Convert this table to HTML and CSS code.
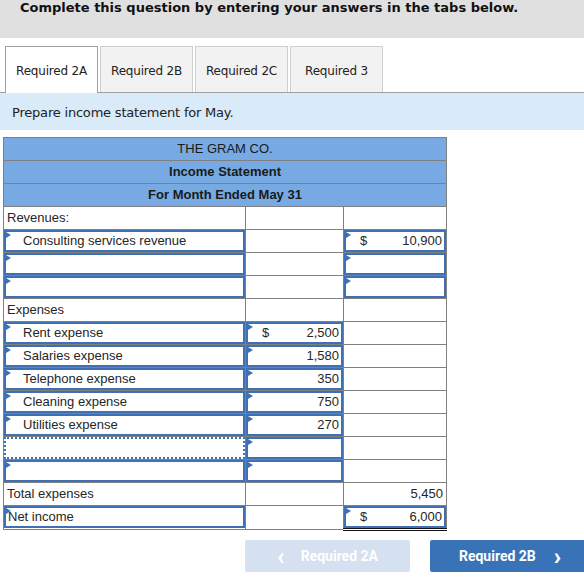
FILE: index.html
```html
<!DOCTYPE html>
<html>
<head>
<meta charset="utf-8">
<link rel="stylesheet" href="styles.css">
</head>
<body>
<div class="top">Complete this question by entering your answers in the tabs below.</div>
<div class="tabs">
  <div class="tab active">Required 2A</div>
  <div class="tab">Required 2B</div>
  <div class="tab">Required 2C</div>
  <div class="tab">Required 3</div>
</div>
<div class="band">Prepare income statement for May.</div>
<table class="stmt">
  <colgroup><col class="c1"><col class="c2"><col class="c3"></colgroup>
  <tr class="hd"><td colspan="3">THE GRAM CO.</td></tr>
  <tr class="hd b"><td colspan="3">Income Statement</td></tr>
  <tr class="hd b"><td colspan="3">For Month Ended May 31</td></tr>
  <tr><td><div class="txt">Revenues:</div></td><td></td><td></td></tr>
  <tr><td><div class="inp ind"><span class="flag"></span>Consulting services revenue</div></td><td></td><td><div class="inp num"><span class="flag"></span><span class="dol">$</span><span>10,900</span></div></td></tr>
  <tr><td><div class="inp"><span class="flag"></span></div></td><td></td><td><div class="inp"><span class="flag"></span></div></td></tr>
  <tr><td><div class="inp"><span class="flag"></span></div></td><td></td><td><div class="inp"><span class="flag"></span></div></td></tr>
  <tr><td><div class="txt">Expenses</div></td><td></td><td></td></tr>
  <tr><td><div class="inp ind"><span class="flag"></span>Rent expense</div></td><td><div class="inp num"><span class="flag"></span><span class="dol">$</span><span>2,500</span></div></td><td></td></tr>
  <tr><td><div class="inp ind"><span class="flag"></span>Salaries expense</div></td><td><div class="inp num"><span class="flag"></span><span></span><span>1,580</span></div></td><td></td></tr>
  <tr><td><div class="inp ind"><span class="flag"></span>Telephone expense</div></td><td><div class="inp num"><span class="flag"></span><span></span><span>350</span></div></td><td></td></tr>
  <tr><td><div class="inp ind"><span class="flag"></span>Cleaning expense</div></td><td><div class="inp num"><span class="flag"></span><span></span><span>750</span></div></td><td></td></tr>
  <tr><td><div class="inp ind"><span class="flag"></span>Utilities expense</div></td><td><div class="inp num"><span class="flag"></span><span></span><span>270</span></div></td><td></td></tr>
  <tr><td><div class="inp dotted"></div></td><td><div class="inp"><span class="flag"></span></div></td><td></td></tr>
  <tr><td><div class="inp"><span class="flag"></span></div></td><td><div class="inp"><span class="flag"></span></div></td><td></td></tr>
  <tr><td><div class="txt">Total expenses</div></td><td></td><td><div class="txt num"><span></span><span>5,450</span></div></td></tr>
  <tr><td><div class="inp"><span class="flag"></span>Net income</div></td><td></td><td class="dbl"><div class="inp num"><span class="flag"></span><span class="dol">$</span><span>6,000</span></div></td></tr>
</table>
<div class="nav">
  <div class="btn prev"><span class="chev">&lsaquo;</span>Required 2A</div>
  <div class="btn next">Required 2B<span class="chev">&rsaquo;</span></div>
</div>
</body>
</html>
```
FILE: styles.css
```css
html, body { margin: 0; padding: 0; background: #fff; }
body { width: 584px; height: 582px; overflow: hidden; }

.top {
  background: #e0e0e0;
  height: 38px;
  box-sizing: border-box;
  padding: 0 0 0 20px;
  font-family: "DejaVu Sans", Verdana, sans-serif;
  font-weight: bold;
  font-size: 13px;
  line-height: 15px;
  color: #111;
}

.tabs {
  display: flex;
  gap: 2px;
  margin-top: 8px;
  padding-left: 5px;
  border-bottom: 1px solid #a0a0a0;
  height: 47px;
  box-sizing: border-box;
}
.tab {
  width: 93px;
  box-sizing: border-box;
  border: 1px solid #cfcfcf;
  border-bottom: none;
  background: #f2f2f2;
  font-family: "DejaVu Sans", Verdana, sans-serif;
  font-size: 12px;
  color: #222;
  display: flex;
  align-items: center;
  justify-content: center;
  padding-top: 2px;
  letter-spacing: -0.2px;
}
.tab.active {
  background: #fff;
  border-color: #a0a0a0;
  height: 47px;
  margin-bottom: -1px;
}

.band {
  background: #d9eaf8;
  height: 37px;
  box-sizing: border-box;
  padding: 12px 0 0 12px;
  font-family: "DejaVu Sans", Verdana, sans-serif;
  font-size: 13px;
  color: #222;
  letter-spacing: -0.2px;
}

.stmt {
  margin: 7px 0 0 3px;
  border-collapse: collapse;
  table-layout: fixed;
  width: 443px;
  font-family: "Liberation Sans", Arial, sans-serif;
  font-size: 13px;
  color: #262626;
}
.c1 { width: 242px; }
.c2 { width: 98px; }
.c3 { width: 103px; }
.stmt tr { height: 23px; }
.stmt td {
  border: 1px solid #808080;
  padding: 0;
  height: 22px;
  vertical-align: top;
}
.hd td {
  background: #77aae2;
  text-align: center;
  line-height: 22px;
  color: #1a1a1a;
}
.hd.b td { font-weight: bold; }

.txt {
  height: 22px;
  line-height: 22px;
  padding: 0 3px;
}
.inp {
  position: relative;
  height: 22px;
  box-sizing: border-box;
  border: 2px solid #3f70b3;
  line-height: 18px;
  padding: 0 2px 0 2px;
  white-space: nowrap;
}
.inp.ind { padding-left: 17px; }
.inp.dotted { border: 2px dotted #3f70b3; }
.num {
  display: flex;
  justify-content: space-between;
}
.txt.num { padding-right: 3px; }
.dol { margin-left: 12px; }
.flag {
  position: absolute;
  left: 0;
  top: 0;
  width: 0;
  height: 0;
  border-top: 3px solid transparent;
  border-bottom: 3px solid transparent;
  border-left: 5px solid #3f70b3;
}
.dbl { border-bottom: 3px double #111 !important; }

.nav {
  display: flex;
  gap: 20px;
  margin-top: 9px;
  padding-left: 245px;
}
.btn {
  flex-shrink: 0;
  height: 32px;
  border-radius: 2px;
  font-family: Roboto, "Liberation Sans", sans-serif;
  font-weight: bold;
  font-size: 14px;
  color: #fff;
  display: flex;
  align-items: center;
  justify-content: center;
  box-sizing: border-box;
}
.prev { width: 165px; background: #d5e1f0; }
.next { width: 160px; background: #3873b8; }
.prev .chev { margin-right: 16px; font-size: 24px; font-weight: 900; line-height: 20px; }
.next .chev { margin-left: 18px; font-size: 24px; font-weight: 900; line-height: 20px; }
```
